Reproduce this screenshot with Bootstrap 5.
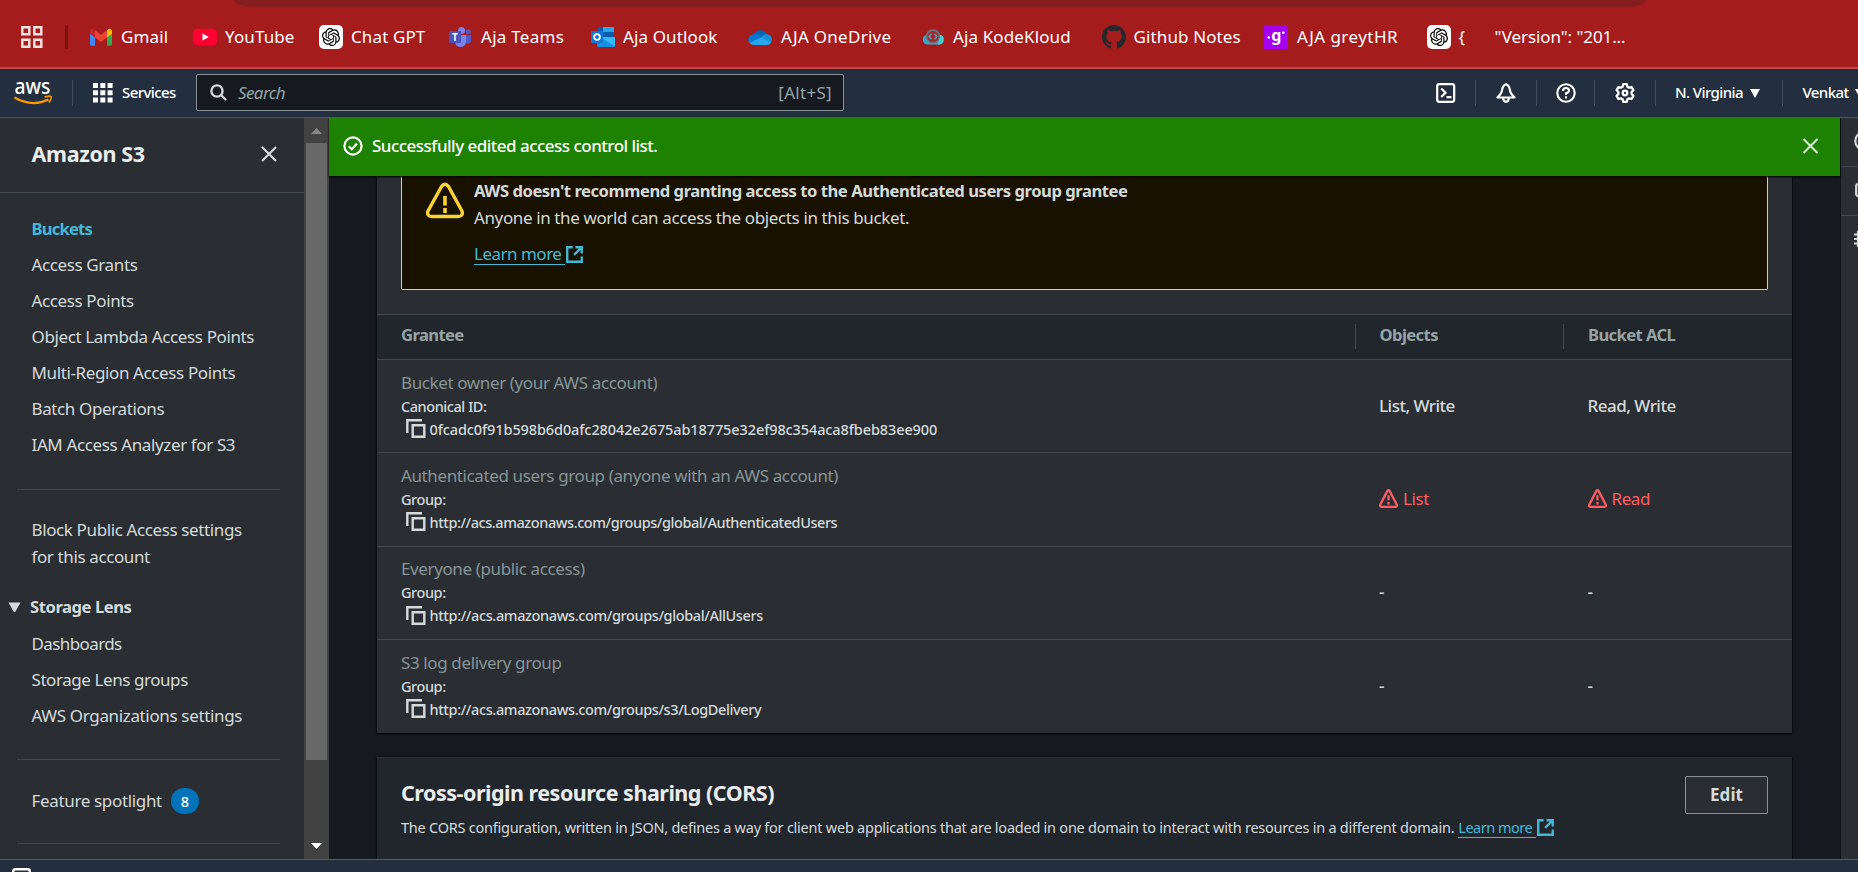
<!DOCTYPE html>
<html lang="en">
<head>
<meta charset="utf-8">
<title>Amazon S3 - Permissions</title>
<meta name="viewport" content="width=device-width, initial-scale=1">
<link rel="stylesheet" href="https://cdn.jsdelivr.net/npm/bootstrap@5.3.0/dist/css/bootstrap.min.css">
<style>
  body { height: 872px; overflow: hidden; background: #16191f; color: #d5dbdb; font-family: "Noto Sans", "Open Sans", sans-serif; font-size: 17px; line-height: 27px; letter-spacing: -.38px; white-space: nowrap; }
  svg { display: block; flex: none; }
  a { text-decoration: none; }
  .strong { font-weight: 700; font-size: 16.6px; letter-spacing: -.5px; }
  .medium { font-weight: 500; }

  /* browser bookmarks */
  .browser { height: 69px; background: #a61c1d; border-bottom: 2px solid #c04a4c; color: #fff; letter-spacing: .12px; }
  .tabstrip { height: 7px; width: 1412px; margin-left: 234px; background: #851d1e; border-radius: 0 0 18px 18px / 0 0 7px 7px; }
  .marks { height: 60px; padding-left: 20px; }
  .marks-rule { width: 3px; height: 24px; margin-left: 22px; margin-right: 21px; background: #7a1213; border-radius: 2px; }
  .marks-grid { display: grid; grid-template-columns: 104px 126px 129px 143px 157px 173px 180.5px 162.5px 162.5px 240px; }
  .marks-grid a { color: #fff; gap: 8px; line-height: 24px; height: 24px; }
  .marks-grid span { margin-top: -1px; }
  .wide-1 { letter-spacing: .28px; }
  .wide-2 { letter-spacing: .45px; }

  /* console header */
  .console { height: 49px; background: #232f3e; border-bottom: 1px solid #4f5661; color: #fff; font-size: 15px; letter-spacing: -.6px; }
  .console > * { flex-shrink: 0; }
  .console > span { margin-top: -1px; }
  .vr-line { width: 1px; height: 26px; background: #414d5c; }
  .searchbox { width: 648px; height: 37px; margin-left: 20px; margin-top: -1px; padding: 0 11px 0 13px; background: #16191f; border: 1px solid #879596; border-radius: 2px; color: #95a5a6; font-size: 17px; }
  .searchbox i { letter-spacing: -.6px; margin-left: 11px; }
  .searchbox span { letter-spacing: .3px; }

  /* side navigation */
  .side { width: 304px; background: #2a2e33; overflow: hidden; }
  .side-head { height: 75px; border-bottom: 1px solid #414750; padding: 0 27px 3px 31.5px; }
  .side-title { font-size: 21.5px; font-weight: 700; color: #eaeded; letter-spacing: -.35px; }
  .side ul { padding-left: 31.5px; }
  .side li { height: 27px; margin-bottom: 9px; }
  .side a { color: #d5dbdb; }
  .side a.current { color: #44b9d6; font-weight: 700; font-size: 16.6px; letter-spacing: -.8px; }
  .side-rule { height: 1px; background: #414750; margin: 0 24px 0 17px; }
  .count { width: 28px; height: 26px; border-radius: 13px; background: #0073bb; color: #fff; font-size: 14.5px; font-weight: 500; line-height: 26px; text-align: center; margin-left: 10.5px; letter-spacing: 0; }
  .scroll { width: 25px; background: #424242; padding: 10px 2px 10px; }
  .thumb { width: 21px; height: 617px; background: #686868; margin: 9px 0 auto; }

  /* content */
  .flash { height: 58px; background: #1d8102; color: #fff; padding: 0 21px 2px 14px; box-shadow: 0 1px 2px #000; z-index: 1; }
  .flash .medium { letter-spacing: -.52px; margin: -1px 0 0 9px; }
  .content { padding: 0 48px; }
  .panel { background: #2a2e33; box-shadow: 0 1px 1px #000, 0 0 2px #000; }
  .warn { height: 114px; margin: 0 24px; border: 1px solid #fbd332; border-top: 0; border-radius: 0 0 2px 2px; background: #191100; padding: 1px 24px 0; }
  .warn .strong { letter-spacing: -.46px; }
  .more { color: #44b9d6; letter-spacing: -.5px; }
  .more span { border-bottom: 1px solid #44b9d6; padding-right: 4px; line-height: 20px; }
  .grid-row { display: grid; grid-template-columns: 977.5px 208.5px 1fr; align-items: center; border-bottom: 1px solid #414750; height: 94px; padding-bottom: 3px; }
  .grid-row > div { padding-left: 24px; }
  .grid-row > div + div { padding-left: 24.5px; }
  .grid-row.short { height: 93px; }
  .grid-row.first { padding-bottom: 2px; }
  .grid-head { height: 46px; margin-top: 24px; padding-bottom: 0; border-top: 1px solid #414750; background: #21252c; color: #95a5a6; }
  .grid-head > div { letter-spacing: -.6px; line-height: 21px; padding-bottom: 4px; height: 25px; margin-top: -1px; }
  .grid-head > div + div { border-left: 1px solid #414750; padding-left: 24px; }
  .cap { color: #879596; line-height: 25px; }
  .tiny { font-size: 14.5px; font-weight: 500; line-height: 23px; letter-spacing: -.44px; }
  .tiny-open { letter-spacing: -.39px; }
  .hash { letter-spacing: -.105px; }
  .perm { letter-spacing: -.5px; font-weight: 500; }
  .danger { color: #ff5d64; gap: 5px; font-weight: 400; letter-spacing: -.4px; }
  .cors { margin-top: 24px; padding: 18px 24px 0; height: 120px; background: #21252c; border-top: 1px solid #2e3238; }
  .cors h2 { font-size: 21.5px; line-height: 30px; font-weight: 700; color: #eaeded; letter-spacing: -.49px; margin: 2px 0 0; }
  .cors p { font-size: 14.5px; letter-spacing: -.241px; line-height: 24px; margin: 7px 0 0; }
  .cors .more { letter-spacing: -.5px; margin-left: 4px; }
  .btn-edit { width: 83px; height: 38px; padding: 0 0 1px; border: 1px solid #879596; border-radius: 2px; background: #2a2e33; color: #d5dbdb; font-size: 17px; font-weight: 700; letter-spacing: .05px; }

  .tools { width: 18px; background: #2a2e33; border-left: 1px solid #101318; overflow: hidden; }
  .tools div { height: 49px; border-bottom: 1px solid #414750; padding-left: 13px; padding-top: 13px; }
  .tools div:last-child { border: 0; }
  .bottom { height: 13px; background: #232f3e; border-top: 1px solid #565b63; padding: 8px 0 0 12px; overflow: hidden; }
</style>
</head>
<body class="d-flex flex-column">

<svg width="0" height="0" class="position-absolute">
  <symbol id="knot" viewBox="0 0 24 24"><path d="M22.2819 9.8211a5.9847 5.9847 0 0 0-.5157-4.9108 6.0462 6.0462 0 0 0-6.5098-2.9A6.0651 6.0651 0 0 0 4.9807 4.1818a5.9847 5.9847 0 0 0-3.9977 2.9 6.0462 6.0462 0 0 0 .7427 7.0966 5.98 5.98 0 0 0 .511 4.9107 6.051 6.051 0 0 0 6.5146 2.9001A5.9847 5.9847 0 0 0 13.2599 24a6.0557 6.0557 0 0 0 5.7718-4.2058 5.9894 5.9894 0 0 0 3.9977-2.9001 6.0557 6.0557 0 0 0-.7475-7.0729zm-9.022 12.6081a4.4755 4.4755 0 0 1-2.8764-1.0408l.1419-.0804 4.7783-2.7582a.7948.7948 0 0 0 .3927-.6813v-6.7369l2.02 1.1686a.071.071 0 0 1 .038.052v5.5826a4.504 4.504 0 0 1-4.4945 4.4944zm-9.6607-4.1254a4.4708 4.4708 0 0 1-.5346-3.0137l.142.0852 4.783 2.7582a.7712.7712 0 0 0 .7806 0l5.8428-3.3685v2.3324a.0804.0804 0 0 1-.0332.0615L9.74 19.9502a4.4992 4.4992 0 0 1-6.1408-1.6464zM2.3408 7.8956a4.485 4.485 0 0 1 2.3655-1.9728V11.6a.7664.7664 0 0 0 .3879.6765l5.8144 3.3543-2.0201 1.1685a.0757.0757 0 0 1-.071 0l-4.8303-2.7865A4.504 4.504 0 0 1 2.3408 7.872zm16.5963 3.8558L13.1038 8.364 15.1192 7.2a.0757.0757 0 0 1 .071 0l4.8303 2.7913a4.4944 4.4944 0 0 1-.6765 8.1042v-5.6772a.79.79 0 0 0-.407-.667zm2.0107-3.0231l-.142-.0852-4.7735-2.7818a.7759.7759 0 0 0-.7854 0L9.409 9.2297V6.8974a.0662.0662 0 0 1 .0284-.0615l4.8303-2.7866a4.4992 4.4992 0 0 1 6.6802 4.66zM8.3065 12.863l-2.02-1.1638a.0804.0804 0 0 1-.038-.0567V6.0742a4.4992 4.4992 0 0 1 7.3757-3.4537l-.142.0805L8.704 5.459a.7948.7948 0 0 0-.3927.6813zm1.0976-2.3654l2.602-1.4998 2.6069 1.4998v2.9994l-2.5974 1.4997-2.6067-1.4997Z"/></symbol>
  <symbol id="copy" viewBox="0 0 20 20"><path d="M1.3 14V1.3H16" fill="none" stroke="#d5dbdb" stroke-width="2.4"/><path d="M6.7 6.2h11.6v11.6H6.7z" fill="none" stroke="#d5dbdb" stroke-width="2.4"/></symbol>
  <symbol id="alert" viewBox="0 0 16 16"><path d="M7.1 1.6Q8 .3 8.9 1.6L15 13.2Q15.5 15 14 15H2Q.5 15 1 13.2Z" fill="none" stroke="currentColor" stroke-width="1.9" stroke-linejoin="round"/><path d="M8 5.3v4.2M8 11v2.1" stroke="currentColor" stroke-width="1.9"/></symbol>
  <symbol id="outside" viewBox="0 0 18 18"><path d="M7 1.3H1.3v15.4h15.4V11" fill="none" stroke="#44b9d6" stroke-width="2.5"/><path d="M10 1.3h6.7V8M16.5 1.5 8.6 9.4" fill="none" stroke="#44b9d6" stroke-width="2.5"/></symbol>
  <symbol id="cross" viewBox="0 0 16 16"><path d="M1 1l14 14M15 1 1 15" stroke="currentColor" stroke-width="2.1"/></symbol>
</svg>

<header class="browser flex-shrink-0">
  <div class="tabstrip"></div>
  <nav class="marks d-flex align-items-center">
    <svg width="23" height="24" viewBox="0 0 23 24" fill="none" stroke="#fbe3e3" stroke-width="2.4"><path d="M2.3 2.3h7v7h-7zM14.3 2.3h7v7h-7zM2.3 14.8h7v7h-7zM14.3 14.8h7v7h-7z"/></svg>
    <div class="marks-rule"></div>
    <div class="marks-grid align-items-center">
      <a href="#" class="d-flex align-items-center">
        <svg width="24" height="24" viewBox="0 0 24 24"><path d="M1 7v12.3q0 1.4 1.4 1.4H6V10.5z" fill="#4285f4"/><path d="M18 10.5v10.2h3.6q1.4 0 1.4-1.4V7z" fill="#34a853"/><path d="M6 5.2v7.3l6 4.5 6-4.5V5.2l-6 4.5z" fill="#ea4335"/><path d="M1 6.6v2.2l5 3.7V5.2L4.5 4.1C3 3.2 1 4.3 1 6.6z" fill="#c5221f"/><path d="M23 6.6v2.2l-5 3.7V5.2l1.5-1.1C21 3.2 23 4.3 23 6.6z" fill="#fbbc04"/></svg><span>Gmail</span></a>
      <a href="#" class="d-flex align-items-center">
        <svg width="24" height="24" viewBox="0 0 24 24"><rect y="3.7" width="24" height="16.6" rx="4.5" fill="#f03"/><path d="M9.5 8.5v7l6.3-3.5z" fill="#fff"/></svg><span>YouTube</span></a>
      <a href="#" class="d-flex align-items-center">
        <svg width="24" height="24" viewBox="0 0 24 24"><rect width="24" height="24" rx="5" fill="#fff"/><use href="#knot" x="3" y="3" width="18" height="18"/></svg><span>Chat GPT</span></a>
      <a href="#" class="d-flex align-items-center wide-1">
        <svg width="24" height="24" viewBox="0 0 24 24"><circle cx="20.3" cy="6.8" r="2.5" fill="#5059c9"/><circle cx="13.5" cy="5.5" r="3.5" fill="#7b83eb"/><path d="M17 10h6v6.5a3.5 3.5 0 0 1-6 1z" fill="#5059c9"/><path d="M7 10h11v6.5a5.5 5.5 0 0 1-11 0z" fill="#7b83eb"/><rect x="1" y="6" width="12" height="12" rx="1" fill="#4b53bc"/><text x="7" y="15.5" font-size="10" font-weight="700" fill="#fff" text-anchor="middle" letter-spacing="0">T</text></svg><span style="margin-left:1px">Aja Teams</span></a>
      <a href="#" class="d-flex align-items-center">
        <svg width="24" height="24" viewBox="0 0 24 24"><path d="M7 2h16v10H7z" fill="#0a5aad"/><path d="M12 2h11v5H12z" fill="#28a8ea"/><path d="M7 7h8v6H7z" fill="#0364b8"/><path d="M6 12h18v9q0 1-1 1H7q-1 0-1-1z" fill="#1490df"/><path d="M24 12v9.5L9 12z" fill="#35b8f1"/><rect y="6" width="12" height="12" rx="1" fill="#0f78d4"/><circle cx="6" cy="12" r="2.9" fill="none" stroke="#fff" stroke-width="1.8"/></svg><span>Aja Outlook</span></a>
      <a href="#" class="d-flex align-items-center wide-1">
        <svg width="24" height="24" viewBox="0 0 24 24"><path d="M5.5 9.5A7.5 7.5 0 0 1 19 9.3L14 15 5 11z" fill="#0364b8"/><path d="M5.5 9.5a5.3 5.3 0 0 0-4.2 8.5L14 13 9.5 9.8Q7 8.9 5.5 9.5z" fill="#0078d4"/><path d="M19 9.3q5 .8 5 5.2-.3 2-1.5 3.5L12 13.5l3-3q2-1.6 4-1.2z" fill="#1490df"/><path d="M13.5 12.5l9.6 5q-1.5 2.5-4.1 2.5H6Q3 20 1.3 17.8z" fill="#28a8ea"/></svg><span style="margin-left:1px">AJA OneDrive</span></a>
      <a href="#" class="d-flex align-items-center">
        <svg width="24" height="24" viewBox="0 0 24 24" fill="none"><path d="M6 19.500h12a5 5 0 0 0 1-9.800A7.300 7.300 0 0 0 5 9.900a5 5 0 0 0 1 9.600z" fill="#3aa5c6"/><path d="M17 19.500h1.500a5 5 0 0 0 .5-9.800z" fill="#3fd0cf"/><circle cx="12" cy="11.500" r="6.300" fill="#a02a30" stroke="#6d6f7d" stroke-width="1.500"/><path d="M10.500 8.700 8 11.500l2.500 2.800M13.500 8.700l2.500 2.800-2.500 2.800" stroke="#55a8b8" stroke-width="1.300"/></svg><span>Aja KodeKloud</span></a>
      <a href="#" class="d-flex align-items-center">
        <svg width="24" height="24" viewBox="0 0 16 16"><path fill="#24292e" d="M8 0C3.580 0 0 3.580 0 8c0 3.540 2.290 6.530 5.470 7.590.4.070.55-.17.55-.38 0-.19-.01-.82-.01-1.490-2.010.37-2.530-.49-2.690-.94-.09-.23-.48-.94-.82-1.130-.28-.15-.68-.52-.01-.53.63-.01 1.080.58 1.230.82.72 1.210 1.870.87 2.330.66.07-.52.28-.87.51-1.070-1.780-.2-3.640-.89-3.640-3.950 0-.87.31-1.590.82-2.150-.08-.2-.36-1.020.08-2.120 0 0 .67-.21 2.200.82.64-.18 1.320-.27 2-.27s1.360.09 2 .27c1.530-1.040 2.200-.82 2.200-.82.44 1.100.16 1.920.08 2.120.51.56.82 1.270.82 2.150 0 3.070-1.870 3.750-3.650 3.950.29.25.54.73.54 1.480 0 1.070-.01 1.930-.01 2.200 0 .21.15.46.55.38A8.010 8.010 0 0 0 16 8c0-4.420-3.580-8-8-8"/></svg><span>Github Notes</span></a>
      <a href="#" class="d-flex align-items-center wide-2">
        <svg width="24" height="24" viewBox="0 0 24 24"><rect width="24" height="24" fill="#a600f0"/><circle cx="4.800" cy="12.500" r="1.300" fill="#fff"/><circle cx="19.300" cy="7.800" r="1.300" fill="#fff"/><text x="12.400" y="16" font-size="16" font-weight="700" fill="#fff" text-anchor="middle" letter-spacing="0">g</text></svg><span style="margin-left:1px">AJA greytHR</span></a>
      <a href="#" class="d-flex align-items-center">
        <svg width="24" height="24" viewBox="0 0 24 24"><rect width="24" height="24" rx="5" fill="#fff"/><use href="#knot" x="3" y="3" width="18" height="18"/></svg><span>{</span><span style="margin-left:21.5px;letter-spacing:-.09px">"Version": "201...</span></a>
    </div>
  </nav>
</header>

<header class="console d-flex align-items-center flex-shrink-0 medium">
  <svg width="40" height="44" viewBox="0 -8 40 44" style="margin-left:13px"><text x="1.500" y="14.500" font-size="22" font-weight="500" fill="#fff" textLength="36" lengthAdjust="spacingAndGlyphs" letter-spacing="0">aws</text><path d="M1.500 18.500Q19 28.500 35.500 20.500" fill="none" stroke="#f90" stroke-width="2.300"/><path d="M31.500 18q5.500-1.500 6.500-.5t-2 6" fill="none" stroke="#f90" stroke-width="1.700"/></svg>
  <div class="vr-line" style="margin:0 20px 0 19px"></div>
  <svg width="20" height="20" viewBox="0 0 20 20" fill="#fff"><path d="M0 0h5v5H0zM7.300 0h5v5h-5zM14.600 0h5v5h-5zM0 7.300h5v5H0zM7.300 7.300h5v5h-5zM14.600 7.300h5v5h-5zM0 14.600h5v5H0zM7.300 14.600h5v5h-5zM14.600 14.600h5v5h-5z"/></svg>
  <span style="margin-left:9px;width:54px">Services</span>
  <div class="searchbox d-flex align-items-center fw-normal">
    <svg width="17" height="17" viewBox="0 0 17 17" fill="none" stroke="#d5dbdb" stroke-width="2.300"><circle cx="7" cy="7" r="5.600"/><path d="m11 11 5 5"/></svg>
    <i>Search</i><span class="ms-auto">[Alt+S]</span>
  </div>
  <svg width="20" height="20" viewBox="0 0 20 20" fill="none" stroke="#fff" stroke-width="2.200" style="margin-left:592px"><rect x="1.200" y="1.200" width="17" height="17.600" rx="2"/><path d="m5.200 5.500 4.300 4.300L5.200 14M10.500 14.200h5"/></svg>
  <div class="vr-line" style="margin:0 20px 0 19px"></div>
  <svg width="20" height="20" viewBox="0 0 20 20" fill="none" stroke="#fff" stroke-width="2.200" stroke-linejoin="round"><path d="M10 1.200Q6.500 2.500 6 7.500 5.500 10.500 1.500 14.500h17Q14.500 10.500 14 7.500 13.500 2.500 10 1.200z"/><path d="M7.200 15q.2 3.800 2.800 3.800t2.800-3.800"/></svg>
  <div class="vr-line" style="margin:0 19px 0 20px"></div>
  <svg width="20" height="20" viewBox="0 0 20 20" fill="none" stroke="#fff" stroke-width="2.100"><circle cx="10" cy="10" r="8.700"/><path d="M7 8q0-3 3-3t3 2.700Q13 9.300 10 10.300V12M10 13.300v2.200"/></svg>
  <div class="vr-line" style="margin:0 20px 0 18px"></div>
  <svg width="20" height="20" viewBox="0 0 20 20" fill="none" stroke="#fff" stroke-width="2.300" stroke-linejoin="round"><path d="M8.200 1.200h3.600l.6 2.500 1.700 1 2.500-.7 1.800 3.100-1.800 1.900v2l1.800 1.900-1.800 3.100-2.500-.7-1.700 1-.6 2.500H8.200l-.6-2.500-1.700-1-2.500.7-1.800-3.100L3.400 11V9L1.600 7.100 3.400 4l2.500.7 1.700-1z"/><circle cx="10" cy="10" r="2.300"/></svg>
  <div class="vr-line" style="margin:0 19px 0 20px"></div>
  <span style="width:75px">N. Virginia</span>
  <svg width="10" height="9" viewBox="0 0 10 9"><path d="M0 0h10L5 9z" fill="#fff"/></svg>
  <div class="vr-line" style="margin:0 19.5px 0 22px"></div>
  <span style="width:52px">Venkat</span>
  <svg width="10" height="9" viewBox="0 0 10 9"><path d="M0 0h10L5 9z" fill="#fff"/></svg>
</header>

<div class="d-flex flex-grow-1 overflow-hidden">
  <aside class="side flex-shrink-0">
    <div class="side-head d-flex align-items-center justify-content-between">
      <span class="side-title">Amazon S3</span>
      <svg width="16" height="16" style="margin-top:1px"><use href="#cross"/></svg>
    </div>
    <ul class="list-unstyled mb-0" style="padding-top:22px">
      <li><a href="#" class="current">Buckets</a></li>
      <li><a href="#">Access Grants</a></li>
      <li><a href="#">Access Points</a></li>
      <li><a href="#">Object Lambda Access Points</a></li>
      <li><a href="#">Multi-Region Access Points</a></li>
      <li><a href="#">Batch Operations</a></li>
      <li><a href="#">IAM Access Analyzer for S3</a></li>
    </ul>
    <div class="side-rule" style="margin-top:31px"></div>
    <div style="padding:26px 0 23px 31.5px"><a href="#">Block Public Access settings<br>for this account</a></div>
    <div class="d-flex align-items-center strong" style="padding-left:8px">
      <svg width="13" height="11" viewBox="0 0 13 11" style="margin-top:2px"><path d="M.5.500h12l-5 9q-1 1.500-2 0z" fill="#d5dbdb"/></svg>
      <span style="margin-left:9px;letter-spacing:-.44px">Storage Lens</span>
    </div>
    <ul class="list-unstyled mb-0" style="padding-top:10px">
      <li><a href="#" style="letter-spacing:-.6px">Dashboards</a></li>
      <li><a href="#" style="letter-spacing:-.43px">Storage Lens groups</a></li>
      <li><a href="#" style="letter-spacing:-.35px">AWS Organizations settings</a></li>
    </ul>
    <div class="side-rule" style="margin-top:30px"></div>
    <div class="d-flex align-items-center" style="padding:28px 0 29px 31.5px"><a href="#" style="width:129px;letter-spacing:-.34px;margin-top:-1px">Feature spotlight</a><span class="count">8</span></div>
    <div class="side-rule"></div>
  </aside>
  <div class="scroll d-flex flex-column align-items-center flex-shrink-0">
    <svg width="11" height="6" viewBox="0 0 11 6"><path d="M5.500 0 11 6H0z" fill="#868686"/></svg>
    <div class="thumb"></div>
    <svg width="11" height="6" viewBox="0 0 11 6"><path d="M5.500 6 11 0H0z" fill="#fff"/></svg>
  </div>

  <main class="d-flex flex-column" style="width:1511px">
    <div class="flash d-flex align-items-center flex-shrink-0">
      <svg width="20" height="20" viewBox="0 0 20 20" fill="none" stroke="#fff" stroke-width="2.200"><circle cx="10" cy="10" r="8.600"/><path d="m5.800 10.300 3 2.900 5.200-5.800"/></svg>
      <span class="medium">Successfully edited access control list.</span>
      <svg class="ms-auto" width="17" height="16" viewBox="0 0 16 16" color="#d9ecd5"><use href="#cross"/></svg>
    </div>
    <div class="content flex-grow-1 overflow-hidden">
      <section class="panel">
        <div class="warn d-flex">
          <svg width="38" height="37" viewBox="0 0 38 37" style="margin-top:5px" fill="none" stroke="#fbd332"><path d="M15.500 4.500q3.500-4.500 7 0L36 29q1.500 5.500-4 5.500H6Q.5 34.500 2 29z" stroke-width="3.400" stroke-linejoin="round"/><path d="M19 14v9.500M19 26v5" stroke-width="3.600"/></svg>
          <div style="margin-left:10px">
            <div class="strong">AWS doesn't recommend granting access to the Authenticated users group grantee</div>
            <div>Anyone in the world can access the objects in this bucket.</div>
            <a href="#" class="more d-inline-flex align-items-center" style="margin-top:13px"><span>Learn more</span><svg width="17" height="17" style="margin-left:1px"><use href="#outside"/></svg></a>
          </div>
        </div>
        <div class="grid-row grid-head strong"><div>Grantee</div><div>Objects</div><div>Bucket ACL</div></div>
        <div class="grid-row short first">
          <div><div class="cap">Bucket owner (your AWS account)</div><div class="tiny">Canonical ID:</div>
            <div class="tiny d-flex align-items-center"><svg width="20" height="20" style="margin:0 4px 0 4.5px"><use href="#copy"/></svg><span class="hash">0fcadc0f91b598b6d0afc28042e2675ab18775e32ef98c354aca8fbeb83ee900</span></div></div>
          <div class="perm">List, Write</div><div class="perm">Read, Write</div>
        </div>
        <div class="grid-row">
          <div><div class="cap">Authenticated users group (anyone with an AWS account)</div><div class="tiny">Group:</div>
            <div class="tiny d-flex align-items-center"><svg width="20" height="20" style="margin:0 4px 0 4.5px"><use href="#copy"/></svg>http://acs.amazonaws.com/groups/global/AuthenticatedUsers</div></div>
          <div class="danger d-flex align-items-center"><svg width="19" height="19"><use href="#alert"/></svg>List</div>
          <div class="danger d-flex align-items-center"><svg width="19" height="19"><use href="#alert"/></svg>Read</div>
        </div>
        <div class="grid-row short">
          <div><div class="cap">Everyone (public access)</div><div class="tiny">Group:</div>
            <div class="tiny tiny-open d-flex align-items-center"><svg width="20" height="20" style="margin:0 4px 0 4.5px"><use href="#copy"/></svg>http://acs.amazonaws.com/groups/global/AllUsers</div></div>
          <div class="perm">-</div><div class="perm">-</div>
        </div>
        <div class="grid-row short border-bottom-0">
          <div><div class="cap">S3 log delivery group</div><div class="tiny">Group:</div>
            <div class="tiny tiny-open d-flex align-items-center"><svg width="20" height="20" style="margin:0 4px 0 4.5px"><use href="#copy"/></svg>http://acs.amazonaws.com/groups/s3/LogDelivery</div></div>
          <div class="perm">-</div><div class="perm">-</div>
        </div>
      </section>
      <section class="panel cors d-flex justify-content-between align-items-start">
        <div>
          <h2>Cross-origin resource sharing (CORS)</h2>
          <p class="d-flex align-items-center">The CORS configuration, written in JSON, defines a way for client web applications that are loaded in one domain to interact with resources in a different domain. <a href="#" class="more d-inline-flex align-items-center"><span>Learn more</span><svg width="17" height="17" style="margin-left:1px"><use href="#outside"/></svg></a></p>
        </div>
        <button class="btn btn-edit">Edit</button>
      </section>
    </div>
  </main>

  <aside class="tools flex-shrink-0">
    <div><svg width="20" height="20" viewBox="0 0 20 20" fill="none" stroke="#d5dbdb" stroke-width="2.200"><circle cx="10" cy="10" r="8.700"/></svg></div>
    <div><svg width="20" height="20" viewBox="0 0 20 20" fill="none" stroke="#d5dbdb" stroke-width="2.200"><rect x="2.200" y="4" width="16" height="12" rx="2"/></svg></div>
    <div><svg width="20" height="20" viewBox="0 0 20 20" fill="none" stroke="#d5dbdb" stroke-width="2.200"><path d="M4 2v16M0 5.500h8M0 10h8M0 14.500h8"/></svg></div>
  </aside>
</div>

<footer class="bottom flex-shrink-0">
  <svg width="19" height="18" viewBox="0 0 19 18"><rect x="1.200" y="1.200" width="16.600" height="15.600" rx="2" fill="none" stroke="#fff" stroke-width="2.400"/></svg>
</footer>

<script src="https://cdn.jsdelivr.net/npm/bootstrap@5.3.0/dist/js/bootstrap.bundle.min.js"></script>
</body>
</html>
